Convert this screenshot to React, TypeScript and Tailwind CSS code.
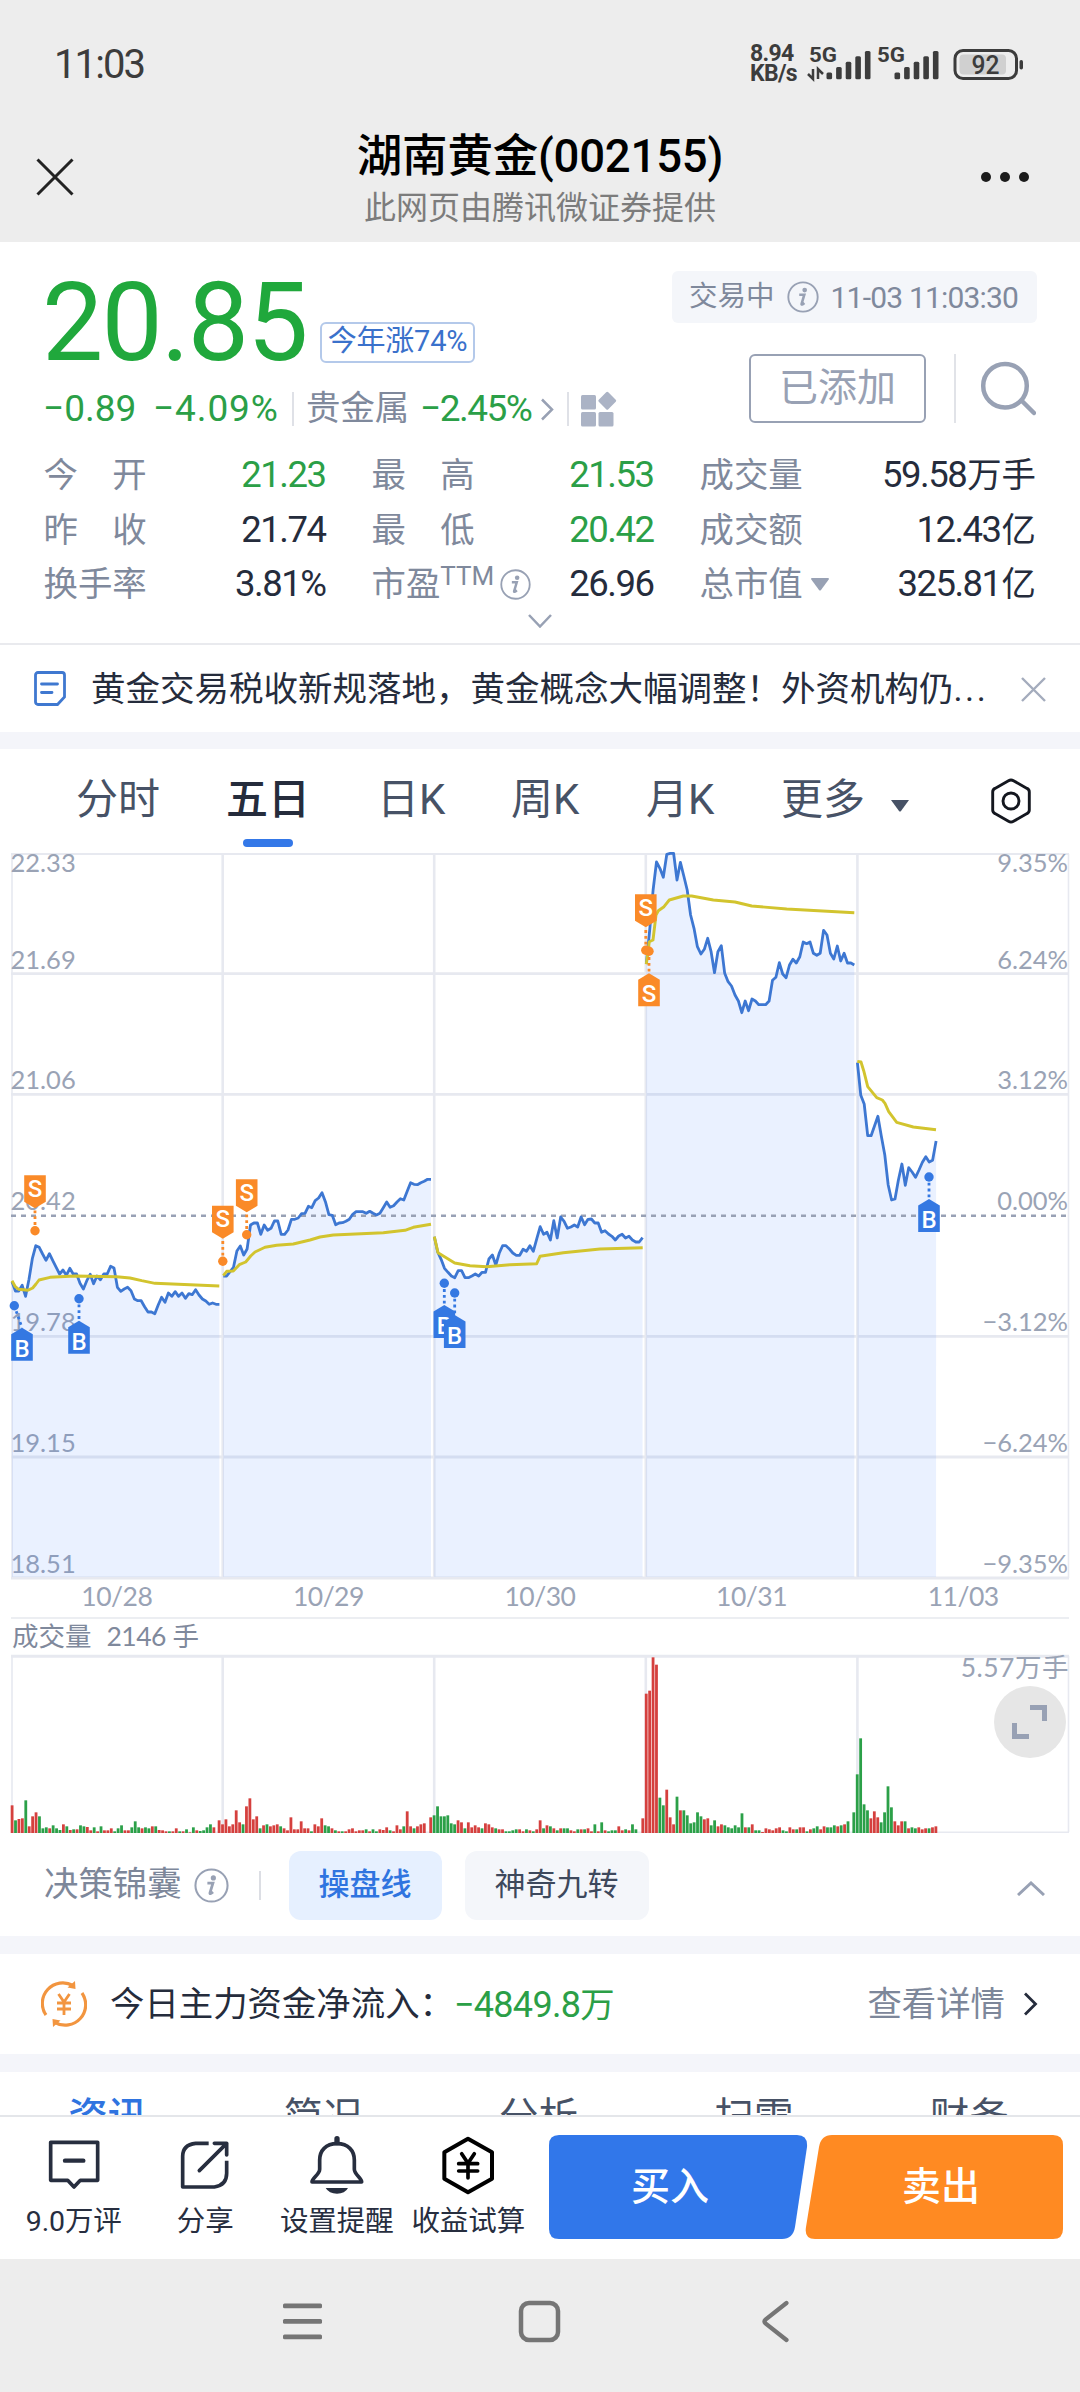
import clsx from "clsx";

type Series = {
  x: number;
  step: number;
  top: number;
  values: number[];
};

type Marker = {
  kind: "S" | "B";
  x: number;
  y: number;
  dotX?: number;
  dotY: number;
  up?: boolean;
};

const CHART_BOTTOM = 1577;

// values are thirds of a pixel below `top`, one sample every 3.4px
const priceSeries: Series[] = [
  {
    x: 12,
    step: 3.4,
    top: 1130,
    values: [
      455, 483, 483, 466, 499, 448, 385, 347, 352, 372, 391, 371, 392, 412, 432, 420, 436, 415, 432, 432, 460,
      477, 452, 433, 461, 438, 449, 432, 432, 409, 414, 472, 484, 477, 472, 482, 507, 512, 512, 530, 546, 546,
      551, 525, 502, 517, 489, 499, 485, 499, 489, 505, 491, 494, 479, 495, 507, 513, 523, 519, 523, 523,
    ],
  },
  {
    x: 223.3,
    step: 3.405,
    top: 1130,
    values: [
      438, 438, 425, 412, 363, 348, 375, 357, 285, 279, 279, 313, 285, 301, 295, 273, 273, 313, 313, 300, 268,
      268, 264, 251, 250, 229, 233, 212, 204, 188, 215, 254, 256, 284, 279, 278, 274, 268, 253, 245, 245, 245,
      250, 244, 250, 255, 250, 233, 216, 232, 227, 216, 206, 210, 184, 158, 163, 164, 158, 154, 148, 148,
    ],
  },
  {
    x: 434.3,
    step: 3.415,
    top: 1130,
    values: [
      320, 366, 388, 415, 427, 438, 443, 422, 422, 443, 443, 438, 432, 438, 427, 427, 387, 375, 405, 370, 347,
      347, 357, 369, 376, 376, 358, 364, 347, 364, 326, 290, 313, 307, 330, 272, 324, 261, 274, 295, 291, 285,
      291, 261, 284, 268, 267, 279, 279, 307, 302, 312, 319, 330, 318, 313, 324, 319, 330, 336, 336, 323,
    ],
  },
  {
    x: 646.3,
    step: 3.41,
    top: 840,
    values: [
      372, 270, 150, 66, 85, 112, 43, 40, 40, 120, 67, 108, 150, 225, 265, 320, 342, 328, 295, 335, 398, 335,
      317, 400, 425, 438, 465, 483, 518, 483, 512, 477, 483, 494, 494, 494, 483, 421, 412, 368, 402, 413, 375,
      358, 369, 350, 306, 311, 306, 340, 346, 340, 271, 285, 340, 357, 318, 363, 340, 369, 369, 375,
    ],
  },
  {
    x: 857.4,
    step: 3.42,
    top: 840,
    values: [
      668, 766, 792, 887, 887, 858, 829, 888, 945, 1035, 1080, 1077, 1020, 972, 1036, 983, 996, 1012, 990, 967,
      950, 966, 961, 903,
    ],
  },
];

const averageLines = [
  "12,1280.7 15.3,1286.7 18.7,1289.3 28,1290.3 32.7,1288 36,1284 39,1280 50,1277.3 75,1276 116.7,1276.7 130,1278 141.7,1280.7 155,1283.3 219.3,1286",
  "223.3,1275.7 226.7,1271.3 233.3,1271 239.3,1264.7 245.7,1262 250.7,1256 255,1252 265,1247.3 276.7,1245.3 293.3,1244 310,1240 320,1237 333.3,1235 383.3,1232.7 405,1230.3 413.3,1227.3 431,1224.3",
  "434.3,1236.7 438,1252.7 454.7,1263 470,1265.7 486.7,1266.7 510,1264.7 536.7,1263.7 540,1256.3 563.3,1252.7 600,1249 642.7,1247.7",
  "646.3,964.3 649.3,941.7 653,940 656,915 658.3,910.7 664,906.7 669.3,900 683.3,896 691.7,896 713.3,900 735,902 751.7,906 786.7,909 854.3,912.7",
  "857.3,1061.3 861,1062 863.7,1070.7 867.7,1086.7 876.7,1097.7 882.3,1100 885,1103.3 888.7,1111.7 896.7,1122.3 913.3,1127 936,1129.7",
];

const markers: Marker[] = [
  { kind: "S", x: 35, y: 1175.3, dotY: 1230.7 },
  { kind: "S", x: 222.8, y: 1205.7, dotY: 1261.3 },
  { kind: "S", x: 246.7, y: 1179.3, dotY: 1234.7 },
  { kind: "S", x: 645.8, y: 894.3, dotY: 950.3 },
  { kind: "S", x: 649, y: 1006.3, dotY: 951.3, up: true },
  { kind: "B", x: 22, y: 1360.7, dotX: 14.3, dotY: 1305.7, up: true },
  { kind: "B", x: 79, y: 1353.7, dotY: 1298.7, up: true },
  { kind: "B", x: 444.3, y: 1338, dotY: 1283.3, up: true },
  { kind: "B", x: 454.7, y: 1348, dotY: 1293, up: true },
  { kind: "B", x: 929, y: 1232, dotY: 1177, up: true },
];

const priceLabels = [
  { y: 872, price: "22.33", percent: "9.35%" },
  { y: 969, price: "21.69", percent: "6.24%" },
  { y: 1089, price: "21.06", percent: "3.12%" },
  { y: 1210, price: "20.42", percent: "0.00%" },
  { y: 1331, price: "19.78", percent: "−3.12%" },
  { y: 1452, price: "19.15", percent: "−6.24%" },
  { y: 1572.5, price: "18.51", percent: "−9.35%" },
];

const dayDividers = [222.7, 434.2, 645.8, 857.4];

const volumeDays = [
  {
    x: 12,
    bars: "83R 38G 42R 44R 98G 20R 50R 62R 50G 14G 17G 14R 23G 14G 9G 26R 20G 9R 11G 11R 23G 20G 18R 8R 17G 5R 20G 8R 8R 14R 5G 14G 23G 8R 8R 17G 35G 17G 14R 17G 14G 20R 20G 9R 8R 5R 5G 5R 14R 5G 5R 11G 2R 17G 8R 6G 8G 17G 26G 17R",
  },
  {
    x: 219,
    bars: "38R 26R 41R 20R 26R 68R 32R 26G 80R 104R 41R 50R 14G 23R 26G 20R 23R 26R 20G 14R 8R 47R 11R 11R 35R 14R 14R 5G 26R 20R 44R 23G 20G 14R 8G 5R 5G 5R 11R 14R 5R 8R 8R 11G 5R 11G 5G 11R 9R 17R 8G 5R 23R 11R 20G 65R 20R 14G 20R 26R 29R",
  },
  {
    x: 430.6,
    bars: "47R 53G 80G 50G 50G 53G 29G 26G 38R 32R 14G 32R 17R 23R 17R 14G 29R 26R 17R 14G 11R 11R 5G 5G 8G 11G 11R 5R 11G 8R 5G 11R 38R 14G 23R 20G 14R 8G 14R 14G 14G 8R 5R 11G 11R 11G 14R 5R 26G 5R 32G 8R 5G 8G 8G 20R 8R 11G 8R 26G 11G",
  },
  {
    x: 642.7,
    bars: "44R 418R 427R 527R 505R 106G 83G 130R 47R 26R 109G 68R 68G 53G 29G 32G 62G 50G 41R 44R 23G 38G 20R 26R 23G 17G 14G 23G 17G 59G 17R 17G 26R 8G 8G 3R 14R 11R 8R 14R 17R 8G 5G 17R 11R 11G 17R 17R 5G 11R 14G 20G 11R 20R 17G 17G 23G 20R 23G 26R 35G",
  },
  {
    x: 853.7,
    bars: "62G 176G 284G 86G 68G 44R 65R 47R 32G 62G 140G 77G 35R 23R 35R 35G 14R 17G 14G 17R 11R 14R 14G 17R 20R",
  },
];

const dates = ["10/28", "10/29", "10/30", "10/31", "11/03"];

const periods = [
  { label: "分时", width: "w-[150px]" },
  { label: "五日", width: "w-[151px]", active: true },
  { label: "日K", width: "w-[134px]" },
  { label: "周K", width: "w-[135px]" },
  { label: "月K", width: "w-[135px]" },
  { label: "更多", width: "w-[109px]" },
];

function seriesPoints({ x, step, top, values }: Series) {
  return values.map((value, i) => `${(x + i * step).toFixed(1)},${(top + value / 3).toFixed(1)}`);
}

function InfoIcon({ className }: { className?: string }) {
  return (
    <svg viewBox="0 0 34 34" className={clsx("shrink-0 text-[#98a1b4]", className)}>
      <circle cx="17" cy="17" r="15.6" fill="none" stroke="currentColor" strokeWidth="2" />
      <circle cx="18.8" cy="9.6" r="2.5" fill="currentColor" />
      <path d="M13 14.6h5.4l-2.9 9.6c-.3 1.1.8 1 3-.9" fill="none" stroke="currentColor" strokeWidth="2.7" />
    </svg>
  );
}

function StatusBar() {
  return (
    <div className="flex h-[128px] items-center justify-between pr-14 pl-[54px] text-[#3c3c3c]">
      <span className="pt-[2px] text-[40px] tracking-[-1.9px]">11:03</span>
      <div className="flex items-center">
        <div className="w-[58px] text-[23px] leading-5 font-bold tracking-[-0.7px]">
          <div>8.94</div>
          <div>KB/s</div>
        </div>
        <svg width="216" height="40" viewBox="809 43 216 40" fill="currentColor" className="overflow-visible">
          <g className="text-[21px] font-bold">
            <text x="810" y="61" textLength="28" lengthAdjust="spacingAndGlyphs">5G</text>
            <text x="878" y="61" textLength="28" lengthAdjust="spacingAndGlyphs">5G</text>
          </g>
          <path d="M814 68v10l-5-5M819 78V68l5 5" fill="none" stroke="currentColor" strokeWidth="2.5" />
          {[0, 1, 2, 3, 4].map((i) => (
            <g key={i}>
              <rect x={827.5 + i * 9.6} y={71.5 - i * 5.4} width="5.6" height={6.8 + i * 5.4} rx="1.5" />
              <rect x={895.5 + i * 9.6} y={71.5 - i * 5.4} width="5.6" height={6.8 + i * 5.4} rx="1.5" />
            </g>
          ))}
          <rect x="956" y="49.5" width="61.5" height="28" rx="8" fill="none" stroke="currentColor" strokeWidth="3" />
          <rect x="960.5" y="53.5" width="46.5" height="20" rx="4" fill="#d0d0d0" />
          <rect x="1020.5" y="59" width="3.5" height="9.5" rx="1.7" />
          <text x="972.5" y="73" className="text-[25px] font-medium" textLength="28" lengthAdjust="spacingAndGlyphs">92</text>
        </svg>
      </div>
    </div>
  );
}

function PageHeader() {
  return (
    <header className="h-[242px] bg-[#ededed]">
      <StatusBar />
      <div className="grid grid-cols-[1fr_auto_1fr] items-start px-9">
        <svg width="38" height="38" viewBox="0 0 38 38" className="mt-[30px]">
          <path d="M1.5 1.5l35 35M36.5 1.5l-35 35" stroke="#222" strokeWidth="3" />
        </svg>
        <div className="flex flex-col items-center">
          <h1 className="h-[54px] text-[45.5px] leading-[58px] font-medium tracking-[-0.2px] text-black">
            湖南黄金(002155)
          </h1>
          <p className="text-[32px] leading-[53px] text-[#7c7c7c]">此网页由腾讯微证券提供</p>
        </div>
        <svg width="50" height="12" viewBox="0 0 50 12" className="mt-[43px] mr-[14px] justify-self-end">
          <circle cx="6" cy="6" r="5" fill="#1c1c1c" />
          <circle cx="25" cy="6" r="5" fill="#1c1c1c" />
          <circle cx="44" cy="6" r="5" fill="#1c1c1c" />
        </svg>
      </div>
    </header>
  );
}

type StatProps = {
  label: string;
  value: string;
  down?: boolean;
  children?: React.ReactNode;
};

function Stat({ label, value, down, children }: StatProps) {
  const unit = value.match(/[万手亿]+$/)?.[0];
  return (
    <div className="flex items-center justify-between">
      <span className="-ml-[1.5px] flex items-center text-[34.4px] text-[#7f899c]">
        {label}
        {children}
      </span>
      <span
        className={clsx(
          "text-[36.5px] tracking-[-1.5px]",
          down ? "text-[#2b9f47]" : "text-[#252c3c]",
          !unit && "-mr-[1.5px]"
        )}
      >
        {value.replace(/[万手亿]+$/, "")}
        {unit ? <span className="ml-[1px] text-[34.4px] tracking-normal">{unit}</span> : null}
      </span>
    </div>
  );
}

function QuoteSummary() {
  return (
    <section className="h-[403px] border-b-2 border-[#e9eaee] pr-[44px] pl-[45px]">
      <div className="flex h-[206px] justify-between">
        <div>
          <div className="flex h-[142px] items-center pt-[21px]">
            <span className="-ml-[3px] w-[278px] text-[109px] leading-none tracking-[-1.8px] text-[#20a83c]">
              20.85
            </span>
            <span className="mt-[37px] flex h-[41px] w-[155px] items-center justify-center rounded-md border-2 border-[#b4c9ea] text-[29px] tracking-[-0.2px] text-[#3a71cb]">
              今年涨74%
            </span>
          </div>
          <div className="flex h-[50px] items-center text-[37px] whitespace-nowrap text-[#2b9f47]">
            <span className="-ml-[2px] w-[110px]">−0.89</span>
            <span className="w-[139px] tracking-[0.9px]">−4.09%</span>
            <span className="h-[34px] w-[2px] bg-[#dfe1e7]" />
            <span className="ml-3 w-[114px] text-[34.4px] text-[#7f899c]">贵金属</span>
            <span className="w-[118px] tracking-[-1.5px]">−2.45%</span>
            <svg width="14" height="23" viewBox="0 0 14 23" className="ml-[2px]">
              <path d="M2 1.5l10 10-10 10" fill="none" stroke="#98a1b4" strokeWidth="2.5" />
            </svg>
            <span className="ml-[13px] h-[34px] w-[2px] bg-[#dfe1e7]" />
            <svg width="38" height="36" viewBox="0 0 38 36" fill="#abb3c5" className="ml-3">
              <rect x="0" y="4" width="15" height="14.5" rx="1.5" />
              <rect x="0" y="21" width="15" height="14.5" rx="1.5" />
              <rect x="17.5" y="21" width="15" height="14.5" rx="1.5" />
              <rect x="19.5" y="3" width="13.5" height="13.5" rx="1.5" transform="rotate(45 26.25 9.75)" />
            </svg>
          </div>
        </div>
        <div className="flex flex-col items-end pt-[29px]">
          <div className="-mr-[1px] flex h-[52px] w-[365px] items-center rounded-md bg-[#f4f6fa] pl-[17px] text-[28.5px] whitespace-nowrap text-[#7f899c]">
            交易中
            <InfoIcon className="mr-3 ml-[12px] size-8" />
            <span className="text-[30px] tracking-[-0.8px]">11-03 11:03:30</span>
          </div>
          <div className="mt-[31px] flex items-center">
            <button className="h-[69px] w-[177px] rounded-md border-2 border-[#98a1b4] text-[39px] leading-[59px] text-[#98a1b4]">
              已添加
            </button>
            <span className="ml-7 h-[69px] w-[2px] bg-[#e1e3e8]" />
            <svg width="56" height="56" viewBox="980 363 56 56" className="ml-[24px]">
              <circle cx="1005" cy="387.7" r="21.8" fill="none" stroke="#98a1b4" strokeWidth="4.5" />
              <path d="M1022 403l12 12" stroke="#98a1b4" strokeWidth="4.5" strokeLinecap="round" />
            </svg>
          </div>
        </div>
      </div>
      <div className="grid grid-cols-[279px_279px_335px] gap-x-[49px] whitespace-nowrap leading-[54.5px]">
        <Stat label="今　开" value="21.23" down />
        <Stat label="最　高" value="21.53" down />
        <Stat label="成交量" value="59.58万手" />
        <Stat label="昨　收" value="21.74" />
        <Stat label="最　低" value="20.42" down />
        <Stat label="成交额" value="12.43亿" />
        <Stat label="换手率" value="3.81%" />
        <Stat label="市盈" value="26.96">
          <span className="-mt-4 w-[60px] text-[26px]">TTM</span>
          <InfoIcon className="size-[31px]" />
        </Stat>
        <Stat label="总市值" value="325.81亿">
          <svg width="18" height="13" viewBox="0 0 18 13" className="ml-[8px]">
            <path d="M1 0h16a1 1 0 0 1 .7 1.5L10 12a1.4 1.4 0 0 1-2 0L.3 1.5A1 1 0 0 1 1 0z" fill="#98a1b4" />
          </svg>
        </Stat>
      </div>
      <svg width="24" height="14" viewBox="0 0 24 14" className="mt-[2px] ml-[483px]">
        <path d="M1 1l11 11.5L23 1" fill="none" stroke="#98a1b4" strokeWidth="2.5" />
      </svg>
    </section>
  );
}

function NewsTicker() {
  return (
    <div className="flex h-[87px] items-center pl-[34px]">
      <svg width="32" height="35" viewBox="0 0 32 35" fill="none" stroke="#3f78d0" strokeWidth="2.8">
        <path d="M4 1.5h24a2.5 2.5 0 0 1 2.5 2.5v22l-7 7.5H4A2.5 2.5 0 0 1 1.5 31V4A2.5 2.5 0 0 1 4 1.5z" />
        <path d="M7.5 13h16M7.5 21.5h10.5" strokeLinecap="round" />
      </svg>
      <p className="mt-[3px] ml-[25px] w-[930px] text-[34.5px] whitespace-nowrap text-[#252c3c]">
        黄金交易税收新规落地，黄金概念大幅调整！外资机构仍<span className="tracking-[2.5px]">...</span>
      </p>
      <svg width="25" height="25" viewBox="0 0 25 25" className="mt-[2px]">
        <path d="M1 1l23 23M24 1L1 24" stroke="#a4acbd" strokeWidth="2.4" />
      </svg>
    </div>
  );
}

function PeriodTabs() {
  return (
    <nav className="flex h-[102px] pl-[76px] text-[42px] text-[#475266]">
      {periods.map((period) => (
        <div key={period.label} className={clsx("shrink-0", period.width)}>
          <div
            className={clsx(
              "flex w-fit flex-col items-center leading-[102px]",
              period.active && "font-medium text-[#252c3c]"
            )}
          >
            {period.label}
            {period.active ? <span className="-mt-3 h-2 w-[50px] rounded bg-[#3478e8]" /> : null}
          </div>
        </div>
      ))}
      <svg width="20" height="12" viewBox="0 0 20 12" className="mt-[51px]">
        <path d="M1 0h18L11 11a1.4 1.4 0 0 1-2 0z" fill="#475266" />
      </svg>
      <svg width="42" height="46" viewBox="0 0 42 46" fill="none" stroke="#14171f" strokeWidth="2.9" className="mt-[28.5px] ml-[80px]">
        <path d="M18.5 2.7a5 5 0 0 1 5 0l13.5 7.7a4 4 0 0 1 2.3 3.9v17.4a4 4 0 0 1-2.3 3.9l-13.5 7.7a5 5 0 0 1-5 0L5 35.6a4 4 0 0 1-2.3-3.9V14.3A4 4 0 0 1 5 10.4z" />
        <circle cx="21" cy="23" r="8" />
      </svg>
    </nav>
  );
}

function TradeMarker({ kind, x, y, dotX = x, dotY, up }: Marker) {
  const color = kind === "S" ? "#fa8a28" : "#3478e2";
  const dir = up ? -1 : 1;
  const tip = y + dir * 33;
  const shoulder = y + dir * 26.5;
  return (
    <g fill={color}>
      <path d={`M${dotX} ${dotY}L${x} ${tip}`} stroke={color} strokeWidth="2.8" strokeDasharray="2.8 3" />
      <circle cx={dotX} cy={dotY} r="4.7" />
      <path d={`M${x - 10.8} ${y}H${x + 10.8}V${shoulder}L${x} ${tip}L${x - 10.8} ${shoulder}Z`} />
      <text x={x} y={y + (up ? -4 : 21.5)} textAnchor="middle" fill="#fff" className="text-[24px] font-medium">
        {kind}
      </text>
    </g>
  );
}

function PriceChart() {
  return (
    <svg width="1080" height="729" viewBox="0 851 1080 729" className="block overflow-visible">
      <g stroke="#e7e9f0" fill="none">
        <path d="M11 854H1069" strokeWidth="2" />
        <path d="M11 973.7H1069M11 1094.3H1069M11 1336.3H1069M11 1457H1069M11 1578H1069" strokeWidth="2.8" />
        <path d="M12 854V1578M1068.5 854V1578" strokeWidth="1.6" />
        {dayDividers.map((x) => (
          <path key={x} d={`M${x} 854V1578`} strokeWidth="2.6" />
        ))}
      </g>
      {priceLabels.map((label) => (
        <g key={label.y} fill="#9aa3b5" className="font-[Lato,sans-serif] text-[25.5px]">
          <text x="10.5" y={label.y}>{label.price}</text>
          <text x="1068" y={label.y} textAnchor="end">{label.percent}</text>
        </g>
      ))}
      {priceSeries.map((series) => {
        const points = seriesPoints(series);
        const endX = series.x + (series.values.length - 1) * series.step;
        return (
          <polygon
            key={series.x}
            points={`${series.x},${CHART_BOTTOM} ${points.join(" ")} ${endX},${CHART_BOTTOM}`}
            fill="#3478ff"
            fillOpacity="0.1"
          />
        );
      })}
      <path d="M11 1215.7H1069" stroke="#98a1b5" strokeWidth="2.6" strokeDasharray="5 5" />
      {priceSeries.map((series) => (
        <polyline
          key={series.x}
          points={seriesPoints(series).join(" ")}
          fill="none"
          stroke="#3d77d2"
          strokeWidth="2.8"
          strokeLinejoin="round"
        />
      ))}
      {averageLines.map((points) => (
        <polyline key={points} points={points} fill="none" stroke="#d2c42e" strokeWidth="2.9" strokeLinejoin="round" />
      ))}
      {markers.map((marker) => (
        <TradeMarker key={`${marker.x}-${marker.y}`} {...marker} />
      ))}
    </svg>
  );
}

function VolumeChart() {
  return (
    <svg width="1080" height="180" viewBox="0 1654 1080 180" className="block overflow-visible">
      <g stroke="#e7e9f0" fill="none">
        <path d="M11 1656.3H1069" strokeWidth="3" />
        <path d="M11 1832.3H1069M12 1656V1832M1068.5 1656V1832" strokeWidth="1.6" />
        {dayDividers.map((x) => (
          <path key={x} d={`M${x} 1656V1832`} strokeWidth="2.6" />
        ))}
      </g>
      {volumeDays.map((day) =>
        day.bars.split(" ").map((bar, i) => {
          const height = parseInt(bar, 10) / 3;
          return (
            <rect
              key={`${day.x}-${i}`}
              x={day.x + i * 3.42 - 1.3}
              y={1833 - height}
              width="2.8"
              height={height}
              fill={bar.endsWith("R") ? "#d5403e" : "#2ba048"}
            />
          );
        })
      )}
      <text x="1069" y="1677" textAnchor="end" fill="#9aa3b5" className="font-[Lato,'Noto_Sans_CJK_SC',sans-serif] text-[26.5px] tracking-[0.5px]">
        5.57万手
      </text>
      <circle cx="1030" cy="1722" r="36" fill="#e6e6e6" />
      <path d="M1030 1707.5h14.5v13.5M1014.5 1723v13.5h14.5" fill="none" stroke="#98a1b4" strokeWidth="5" />
    </svg>
  );
}

function StrategyBar() {
  return (
    <div className="flex h-[102px] items-center pl-[44px] text-[34.4px] text-[#7d879a]">
      <span>决策锦囊</span>
      <InfoIcon className="ml-[12px] size-[35px]" />
      <span className="ml-[30px] h-[29px] w-[2px] bg-[#dcdee4]" />
      <button className="ml-[28px] h-[69px] w-[153px] rounded-xl bg-[#e6f0ff] text-[31px] leading-[68px] font-medium text-[#2f74e0]">
        操盘线
      </button>
      <button className="ml-[23px] h-[69px] w-[184px] rounded-xl bg-[#f4f6fa] text-[31px] leading-[68px] text-[#3d485c]">
        神奇九转
      </button>
      <svg width="28" height="15" viewBox="0 0 28 15" className="mt-[7px] ml-[368px]">
        <path d="M1 14L14 2l13 12" fill="none" stroke="#98a1b4" strokeWidth="3" />
      </svg>
    </div>
  );
}

function CapitalFlow() {
  return (
    <div className="flex h-[100px] items-center pl-[41px] text-[34.4px] text-[#252c3c]">
      <svg width="46" height="48" viewBox="0 0 46 48" fill="none" stroke="#f2953f" strokeWidth="3.2">
        <path d="M5 35A20.5 20.5 0 0 1 32 5.5M41 13A20.5 20.5 0 0 1 14 42.5" />
        <path d="M34 1l.5 8-8-1.5zM12 47l-.5-8 8 1.5z" fill="#f2953f" stroke="none" />
        <path d="M17.5 14l5.5 8 5.5-8M16 23h14M16 29h14M23 22v13" strokeWidth="2.8" />
      </svg>
      <span className="mt-[2px] ml-[23px]">今日主力资金净流入：</span>
      <span className="mt-[2px] text-[36px] tracking-[-0.7px] text-[#2b9f47]">
        −4849.8<span className="text-[34.4px]">万</span>
      </span>
      <span className="mt-[2px] mr-[18px] ml-auto text-[#7d879a]">查看详情</span>
      <svg width="15" height="24" viewBox="0 0 15 24" className="mr-[42px]">
        <path d="M2 1.5L12.5 12 2 22.5" fill="none" stroke="#252c3c" strokeWidth="2.8" />
      </svg>
    </div>
  );
}

function SectionTabs() {
  return (
    <nav className="grid h-[43px] grid-cols-5 overflow-hidden pr-[3px] text-center text-[39.5px] leading-[91px] text-[#475266]">
      {["资讯", "简况", "分析", "扫雷", "财务"].map((label, i) => (
        <span key={label} className={clsx(i === 0 && "font-medium text-[#2f74e0]")}>
          {label}
        </span>
      ))}
    </nav>
  );
}

function BottomAction({ label, viewBox, children }: { label: string; viewBox: string; children: React.ReactNode }) {
  return (
    <button className="flex w-[131.5px] flex-col items-center whitespace-nowrap text-[#272e3f]">
      <svg
        width="60"
        height="60"
        viewBox={viewBox}
        fill="none"
        stroke="currentColor"
        strokeWidth="11"
        strokeLinejoin="round"
        className="mb-[6px]"
      >
        {children}
      </svg>
      <span className="text-[28.5px] leading-[42px] tracking-[-0.1px]">{label}</span>
    </button>
  );
}

function BottomBar() {
  return (
    <footer className="flex h-[144px] border-t-2 border-[#e4e6ea] bg-white pt-[18px] pl-[8px]">
      <BottomAction label="9.0万评" viewBox="71 45 180 180">
        <path d="M91 67H232V181H180L161 201L142 181H91Z" />
        <path d="M134 122H189" strokeWidth="13" strokeLinecap="round" />
      </BottomAction>
      <BottomAction label="分享" viewBox="470 45 180 180">
        <path d="M571 70H532Q493 74 493 109V201H588Q625 196 625 160V122" />
        <path d="M588 70H625V105M625 70L543 152" strokeLinecap="round" />
      </BottomAction>
      <BottomAction label="设置提醒" viewBox="862 45 180 180">
        <path d="M952 56V68" strokeWidth="16" strokeLinecap="round" />
        <path d="M952 71C918 71 900 92 900 120V148C900 164 877 174 877 186H1026C1026 174 1004 164 1004 148V120C1004 92 986 71 952 71Z" />
        <path d="M918 204H985Q976 221 952 221T918 204Z" fill="currentColor" stroke="none" />
      </BottomAction>
      <BottomAction label="收益试算" viewBox="1255 45 180 180">
        <g stroke="#000">
          <path d="M1345 56L1417 97V176L1345 217L1274 176V97Z" strokeWidth="12" />
          <path d="M1326 101L1345 130L1364 101M1317 131H1374M1317 153H1374M1345 130V174" strokeWidth="11" strokeLinecap="round" />
        </g>
      </BottomAction>
      <div className="ml-[15px] grid grid-cols-1 text-[39px] font-medium text-white">
        <svg width="514" height="104" viewBox="0 0 514 104" className="col-start-1 row-start-1">
          <path d="M10 0H248Q259 0 258 12L246 92Q244 104 233 104H10Q0 104 0 94V10Q0 0 10 0Z" fill="#3177ea" />
          <path d="M283 0H504Q514 0 514 10V94Q514 104 504 104H266Q255 104 257 92L270 12Q272 0 283 0Z" fill="#ff8a22" />
        </svg>
        <div className="col-start-1 row-start-1 grid h-[104px] grid-cols-[242px_272px] text-center leading-[105px]">
          <span>买入</span>
          <span className="pl-7">卖出</span>
        </div>
      </div>
    </footer>
  );
}

function SystemNav() {
  return (
    <div className="flex h-[133px] items-start bg-[#ededed] pt-[40px] pl-[282px] text-[#757575]">
      <svg width="42" height="44" viewBox="0 0 42 44" fill="currentColor">
        <rect x="1" y="4.5" width="39" height="4.8" rx="1.5" />
        <rect x="1" y="20" width="39" height="4.8" rx="1.5" />
        <rect x="1" y="35.5" width="39" height="4.8" rx="1.5" />
      </svg>
      <svg width="44" height="44" viewBox="0 0 44 44" className="ml-[193px]">
        <rect x="4" y="4" width="37" height="37" rx="8" fill="none" stroke="currentColor" strokeWidth="4.5" />
      </svg>
      <svg width="30" height="44" viewBox="0 0 30 44" className="ml-[199px]">
        <path
          d="M26.5 4L5.5 20.5q-2 2 0 4L26.5 41"
          fill="none"
          stroke="currentColor"
          strokeWidth="4.2"
          strokeLinecap="round"
        />
      </svg>
    </div>
  );
}

export default function App() {
  return (
    <main className="h-[2392px] w-[1080px] overflow-hidden bg-white font-[Roboto,'Noto_Sans_CJK_SC',sans-serif]">
      <PageHeader />
      <QuoteSummary />
      <NewsTicker />
      <div className="h-[17px] bg-[#f4f5fa]" />
      <PeriodTabs />
      <PriceChart />
      <div className="ml-[11px] grid h-[39px] w-[1058px] grid-cols-5 border-b-2 border-[#eceef2] text-center font-[Lato,sans-serif] text-[26.5px] leading-[33px] tracking-[-0.5px] text-[#9aa3b5]">
        {dates.map((date) => (
          <span key={date}>{date}</span>
        ))}
      </div>
      <div className="flex h-[35px] items-center pl-3 text-[26.5px] text-[#7f899c]">
        成交量<span className="mr-[6px] ml-[11px] w-[64px] pl-1 font-[Lato,sans-serif] tracking-[-0.5px]">2146</span>手
      </div>
      <VolumeChart />
      <StrategyBar />
      <div className="h-[18px] bg-[#f4f5fa]" />
      <CapitalFlow />
      <div className="h-[18px] bg-[#f4f5fa]" />
      <SectionTabs />
      <BottomBar />
      <SystemNav />
    </main>
  );
}
